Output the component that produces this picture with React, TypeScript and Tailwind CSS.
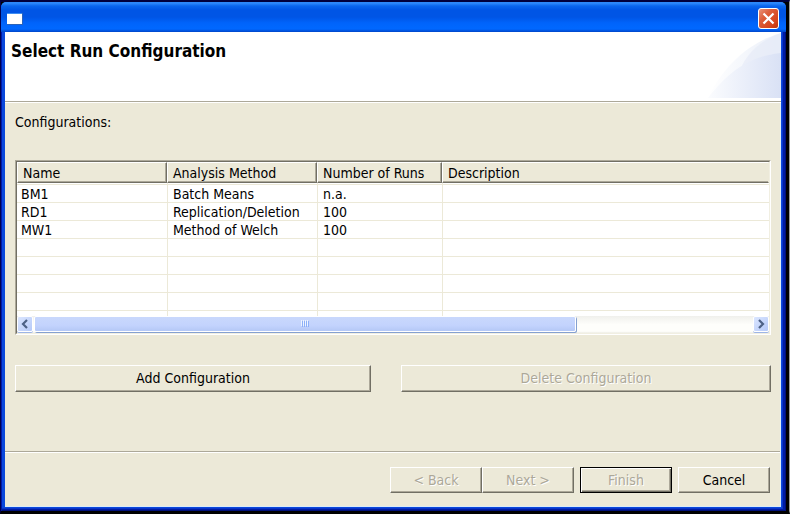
import type { ButtonHTMLAttributes } from 'react';
import { clsx } from 'clsx';

const columns = ['Name', 'Analysis Method', 'Number of Runs', 'Description'];

const rows = [
  ['BM1', 'Batch Means', 'n.a.', ''],
  ['RD1', 'Replication/Deletion', '100', ''],
  ['MW1', 'Method of Welch', '100', ''],
  ['', '', '', ''],
  ['', '', '', ''],
  ['', '', '', ''],
  ['', '', '', ''],
  ['', '', '', ''],
];

type PushButtonProps = ButtonHTMLAttributes<HTMLButtonElement> & { isDefault?: boolean };

function PushButton({ isDefault = false, className, ...props }: PushButtonProps) {
  return (
    <button
      type="button"
      className={clsx(
        'flex items-center justify-center border bg-[#ece9d8] text-black disabled:text-[#aca899] disabled:[text-shadow:1px_1px_0_#ffffff]',
        isDefault
          ? 'border-black shadow-[inset_1px_1px_0_#ffffff,inset_-1px_-1px_0_#716f64,inset_-2px_-2px_0_#aca899]'
          : 'border-t-white border-r-[#716f64] border-b-[#716f64] border-l-white shadow-[inset_-1px_-1px_0_#aca899]',
        className,
      )}
      {...props}
    />
  );
}

function TitleBar() {
  return (
    <header className="flex h-[30px] shrink-0 items-center justify-between rounded-t-[5px] bg-[linear-gradient(to_bottom,#2a86f8_0px,#2f8bfc_1px,#0a66ee_4px,#0055e5_8px,#0055e5_15px,#0064fb_21px,#0068ff_27px,#0045c8_30px)] pt-[3px] pr-[7px] pl-[6px]">
      <svg width="16" height="12" viewBox="0 0 16 12" shapeRendering="crispEdges" aria-hidden="true">
        <rect width="16" height="12" fill="#2b63b8" />
        <rect width="15" height="11" fill="#ffffff" />
        <rect width="15" height="1" fill="#3d8df2" />
      </svg>
      <button type="button" aria-label="Close" className="h-[21px] w-[21px]">
        <svg width="21" height="21" viewBox="0 0 21 21">
          <defs>
            <linearGradient id="closeFace" x1="0" y1="0" x2="1" y2="1">
              <stop offset="0" stopColor="#e9967e" />
              <stop offset="0.35" stopColor="#dd5f3c" />
              <stop offset="0.75" stopColor="#d6451c" />
              <stop offset="1" stopColor="#b93408" />
            </linearGradient>
          </defs>
          <rect x="0.5" y="0.5" width="20" height="20" rx="2.5" fill="url(#closeFace)" stroke="#ffffff" />
          <path d="M5.5 5.5 L15.5 15.5 M15.5 5.5 L5.5 15.5" stroke="#ffffff" strokeWidth="2.2" />
        </svg>
      </button>
    </header>
  );
}

function Banner() {
  return (
    <div className="flex h-[71px] shrink-0 items-start justify-between border-b border-white bg-white shadow-[inset_0_-1px_0_#aca899]">
      <h1 className="pt-[9px] pl-[6px] text-[17px] leading-[20px] font-bold">Select Run Configuration</h1>
      <svg width="76" height="66" viewBox="0 0 76 66" aria-hidden="true">
        <defs>
          <linearGradient id="outerSweep" x1="0" y1="0" x2="1" y2="0">
            <stop offset="0" stopColor="#ffffff" />
            <stop offset="1" stopColor="#eaeff9" />
          </linearGradient>
          <linearGradient id="innerSweep" x1="0" y1="0" x2="1" y2="0">
            <stop offset="0" stopColor="#fbfcfe" />
            <stop offset="1" stopColor="#d9e1f5" />
          </linearGradient>
        </defs>
        <path d="M3 66 C14 42 38 12 76 1 V66 Z" fill="url(#outerSweep)" />
        <path d="M36 36 C42 22 54 9 76 1 V21 C60 23 46 28 36 36 Z" fill="#e4eaf7" opacity="0.6" />
        <path d="M3 66 C20 44 42 24 76 21 V66 Z" fill="url(#innerSweep)" />
      </svg>
    </div>
  );
}

function ScrollArrow({ direction }: { direction: 'left' | 'right' }) {
  return (
    <button
      type="button"
      aria-label={direction === 'left' ? 'Scroll left' : 'Scroll right'}
      className="flex h-[16px] w-[16px] shrink-0 items-center justify-center rounded-[2px] border border-white bg-[linear-gradient(135deg,#dbe6ff,#b5c9f8)] shadow-[0_1px_0_#9db5e6]"
    >
      <svg width="8" height="10" viewBox="0 0 8 10">
        <path
          d={direction === 'left' ? 'M6 1 L2 5 L6 9' : 'M2 1 L6 5 L2 9'}
          fill="none"
          stroke="#4d6185"
          strokeWidth="2.2"
        />
      </svg>
    </button>
  );
}

function HorizontalScrollbar() {
  return (
    <div className="flex h-[17px] bg-[linear-gradient(to_bottom,#f0f0ec,#fefefb_50%,#fefefb_90%,#eeede5)]">
      <ScrollArrow direction="left" />
      <div className="flex min-w-0 flex-1 px-[1px]">
        <div className="flex h-[16px] w-[75.5%] items-center justify-center gap-px rounded-[2px] border border-white bg-[linear-gradient(to_bottom,#c9d8fc,#c3d3fd_60%,#b4c8f6)] shadow-[1px_1px_0_#85a0d0]">
          {[0, 1, 2, 3].map((grip) => (
            <span key={grip} className="h-[6px] w-px bg-[#8cb0f8] shadow-[-1px_-1px_0_#eef4fe]" />
          ))}
        </div>
      </div>
      <ScrollArrow direction="right" />
    </div>
  );
}

function ConfigurationTable() {
  return (
    <div className="border border-t-[#aca899] border-r-white border-b-white border-l-[#aca899]">
      <div className="border border-t-[#716f64] border-r-[#f1efe2] border-b-[#f1efe2] border-l-[#716f64] bg-white">
        <div className="h-[154px] overflow-hidden">
          <table aria-labelledby="configurations-label" className="w-full table-fixed border-separate border-spacing-0 text-left">
            <colgroup>
              <col className="w-[150px]" />
              <col className="w-[150px]" />
              <col className="w-[125px]" />
              <col />
            </colgroup>
            <thead>
              <tr>
                {columns.map((column) => (
                  <th
                    key={column}
                    scope="col"
                    className="h-[21px] border border-t-white border-r-[#716f64] border-b-[#716f64] border-l-white bg-[#ece9d8] py-0 pr-0 pl-[5px] leading-[18px] font-normal whitespace-nowrap shadow-[inset_-1px_-1px_0_#aca899] last:border-r-[#ece9d8] last:shadow-[inset_0_-1px_0_#aca899]"
                  >
                    {column}
                  </th>
                ))}
              </tr>
            </thead>
            <tbody>
              <tr aria-hidden="true">
                {columns.map((column) => (
                  <td key={column} className="h-[2px] border-b border-l border-[#ece9d8] p-0 first:border-l-0" />
                ))}
              </tr>
              {rows.map((row, rowIndex) => (
                <tr key={rowIndex}>
                  {row.map((cell, cellIndex) => (
                    <td
                      key={cellIndex}
                      className="h-[18px] border-b border-l border-[#ece9d8] pt-[2px] pr-0 pb-0 pl-[5px] leading-[15px] whitespace-nowrap first:border-l-0 first:pl-[4px]"
                    >
                      {cell}
                    </td>
                  ))}
                </tr>
              ))}
            </tbody>
          </table>
        </div>
        <HorizontalScrollbar />
      </div>
    </div>
  );
}

export default function App() {
  return (
    <div className="flex min-h-screen flex-col border-t-2 border-r border-b-[3px] border-l border-t-[#00003c] border-r-[#9a9a9a] border-b-black border-l-[#000050] bg-black pr-[3px] font-['DejaVu_Sans_Condensed','DejaVu_Sans',sans-serif] text-[14px] text-black">
      <div className="flex flex-1 flex-col rounded-t-[6px] bg-[#0a48dc] shadow-[inset_1px_0_0_#0019a8,inset_-1px_-1px_0_#00107a,inset_-3px_-2px_0_#001ca4,inset_-4px_-3px_0_#0a35c8]">
        <TitleBar />
        <main className="flex flex-1 flex-col pr-[5px] pb-[4px] pl-[4px]">
          <Banner />
          <div className="flex flex-1 flex-col border-r border-b border-[#dcebf7] bg-[#ece9d8]">
            <section className="flex flex-1 flex-col pt-[9px] pr-[9px] pl-[10px]">
              <h2 id="configurations-label" className="leading-[20px]">
                Configurations:
              </h2>
              <div className="pt-[28px]">
                <ConfigurationTable />
              </div>
              <div className="flex gap-[30px] pt-[30px]">
                <PushButton className="h-[27px] flex-[356]">Add Configuration</PushButton>
                <PushButton className="h-[27px] flex-[370]" disabled>
                  Delete Configuration
                </PushButton>
              </div>
            </section>
            <footer className="flex justify-end border-t border-[#aca899] pt-[15px] pr-[10px] pb-[13px] shadow-[inset_0_1px_0_#ffffff]">
              <PushButton className="h-[26px] w-[92px]" disabled>
                &lt; Back
              </PushButton>
              <PushButton className="mr-[6px] h-[26px] w-[92px]" disabled>
                Next &gt;
              </PushButton>
              <PushButton className="mr-[6px] h-[26px] w-[92px]" isDefault disabled>
                Finish
              </PushButton>
              <PushButton className="h-[26px] w-[92px]">Cancel</PushButton>
            </footer>
          </div>
        </main>
      </div>
    </div>
  );
}
